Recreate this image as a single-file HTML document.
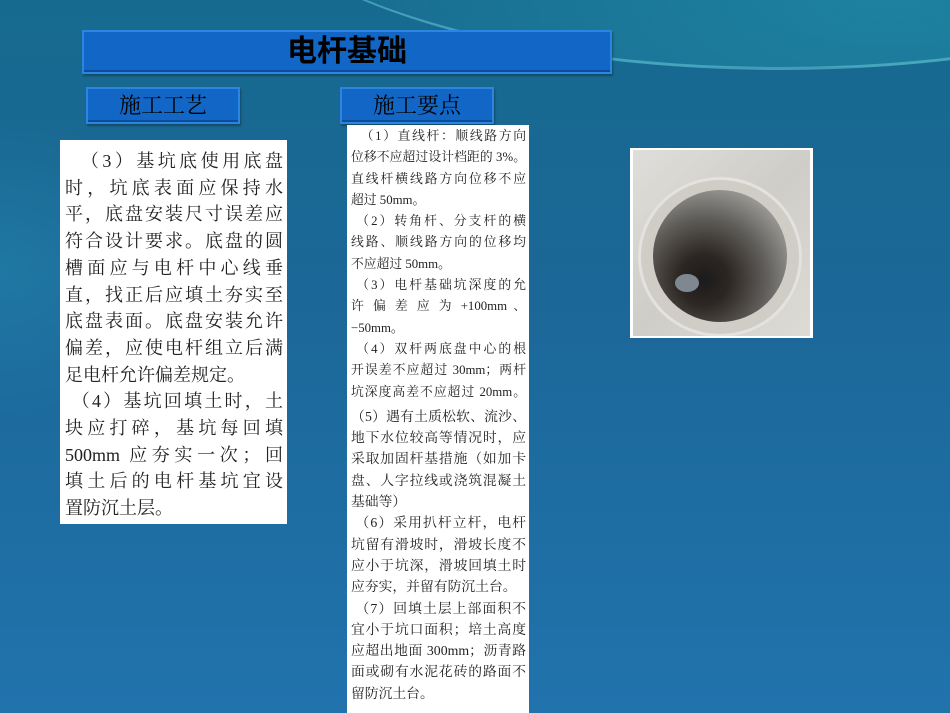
<!DOCTYPE html>
<html><head><meta charset="utf-8"><style>
*{margin:0;padding:0;box-sizing:border-box}
body{width:950px;height:713px;overflow:hidden;position:relative;
background:linear-gradient(180deg,#176a8f 0%,#1b6797 40%,#2173ad 100%);
font-family:"Liberation Serif","Noto Serif CJK SC",serif}
.sw{position:absolute;border-radius:50%}
.bar{position:absolute;background:#1266c6;border:2px solid #2a86e0;box-shadow:inset 0 -2px 0 #0b4d99,1px 2px 2px rgba(0,0,0,.3);color:#000;text-align:center;font-family:"Liberation Sans","Noto Sans CJK SC",sans-serif}
.box{position:absolute;background:#fff}
.l{display:block;text-align:justify;text-align-last:justify;white-space:nowrap}
</style></head><body>
<div class="sw" style="left:230px;top:-330px;width:1100px;height:400px;border-bottom:3px solid rgba(120,220,230,.45);background:radial-gradient(ellipse at 60% 80%,rgba(40,160,180,.45),transparent 70%)"></div>
<div class="sw" style="left:-200px;top:120px;width:400px;height:300px;background:radial-gradient(ellipse,rgba(40,160,190,.3),transparent 70%)"></div>

<div class="bar" style="left:82px;top:30px;width:530px;height:44px;font-size:30px;line-height:40px;font-weight:bold">电杆基础</div>
<div class="bar" style="left:86px;top:87px;width:154px;height:37px;font-size:22px;line-height:34px;font-family:'Liberation Serif','Noto Serif CJK SC',serif">施工工艺</div>
<div class="bar" style="left:340px;top:87px;width:154px;height:37px;font-size:22px;line-height:34px;font-family:'Liberation Serif','Noto Serif CJK SC',serif">施工要点</div>

<div class="box" style="left:60px;top:140px;width:227px;height:384px;padding:8px 4px 0 5px;font-size:18px;line-height:26.7px;color:#222">
<span class="l">&nbsp;&nbsp;（3）基坑底使用底盘</span>
<span class="l">时，坑底表面应保持水</span>
<span class="l">平，底盘安装尺寸误差应</span>
<span class="l">符合设计要求。底盘的圆</span>
<span class="l">槽面应与电杆中心线垂</span>
<span class="l">直，找正后应填土夯实至</span>
<span class="l">底盘表面。底盘安装允许</span>
<span class="l">偏差，应使电杆组立后满</span>
<span class="l" style="text-align-last:left">足电杆允许偏差规定。</span>
<span class="l">&nbsp;（4）基坑回填土时，土</span>
<span class="l">块应打碎，基坑每回填</span>
<span class="l">500mm 应夯实一次；回</span>
<span class="l">填土后的电杆基坑宜设</span>
<span class="l" style="text-align-last:left">置防沉土层。</span>
</div>

<div class="box" style="left:347px;top:125px;width:182px;height:588px;padding:1px 3px 0 4px;font-size:12.8px;line-height:21.3px;color:#222;overflow:hidden">
<span class="l">&nbsp;&nbsp;（1）直线杆：顺线路方向</span>
<span class="l">位移不应超过设计档距的 3%。</span>
<span class="l">直线杆横线路方向位移不应</span>
<span class="l" style="text-align-last:left">超过 50mm。</span>
<span class="l">&nbsp;（2）转角杆、分支杆的横</span>
<span class="l">线路、顺线路方向的位移均</span>
<span class="l" style="text-align-last:left">不应超过 50mm。</span>
<span class="l">&nbsp;（3）电杆基础坑深度的允</span>
<span class="l">许 偏 差 应 为 +100mm 、</span>
<span class="l" style="text-align-last:left">−50mm。</span>
<span class="l">&nbsp;（4）双杆两底盘中心的根</span>
<span class="l">开误差不应超过 30mm；两杆</span>
<span class="l">坑深度高差不应超过 20mm。</span>
<div style="font-size:13.8px;margin-top:3px">
<span class="l">（5）遇有土质松软、流沙、</span>
<span class="l">地下水位较高等情况时，应</span>
<span class="l">采取加固杆基措施（如加卡</span>
<span class="l">盘、人字拉线或浇筑混凝土</span>
<span class="l" style="text-align-last:left">基础等）</span>
<span class="l">&nbsp;（6）采用扒杆立杆，电杆</span>
<span class="l">坑留有滑坡时，滑坡长度不</span>
<span class="l">应小于坑深，滑坡回填土时</span>
<span class="l" style="text-align-last:left">应夯实，并留有防沉土台。</span>
<span class="l">&nbsp;（7）回填土层上部面积不</span>
<span class="l">宜小于坑口面积；培土高度</span>
<span class="l">应超出地面 300mm；沥青路</span>
<span class="l">面或砌有水泥花砖的路面不</span>
<span class="l" style="text-align-last:left">留防沉土台。</span>
</div>
</div>

<div style="position:absolute;left:630px;top:148px;width:183px;height:190px;background:#fff;padding:2px 3px">
<div style="position:relative;width:177px;height:186px;overflow:hidden;background:linear-gradient(135deg,#e0deda,#cfcdc8 50%,#dddbd6)">
<div style="position:absolute;left:8px;top:30px;width:158px;height:154px;border-radius:50%;background:#d0cdc7;box-shadow:0 0 0 3px #e4e2de"></div>
<div style="position:absolute;left:20px;top:40px;width:134px;height:132px;border-radius:50%;background:radial-gradient(circle at 38% 68%,#1b1b1b 0%,#2c2623 20%,#403b37 32%,#5e5c59 50%,#8e8c88 72%,#b8b6b2 92%,#c6c4c0 100%)"></div>
<div style="position:absolute;left:42px;top:124px;width:24px;height:18px;border-radius:50%;background:#7f8890"></div>
</div></div>
</body></html>
